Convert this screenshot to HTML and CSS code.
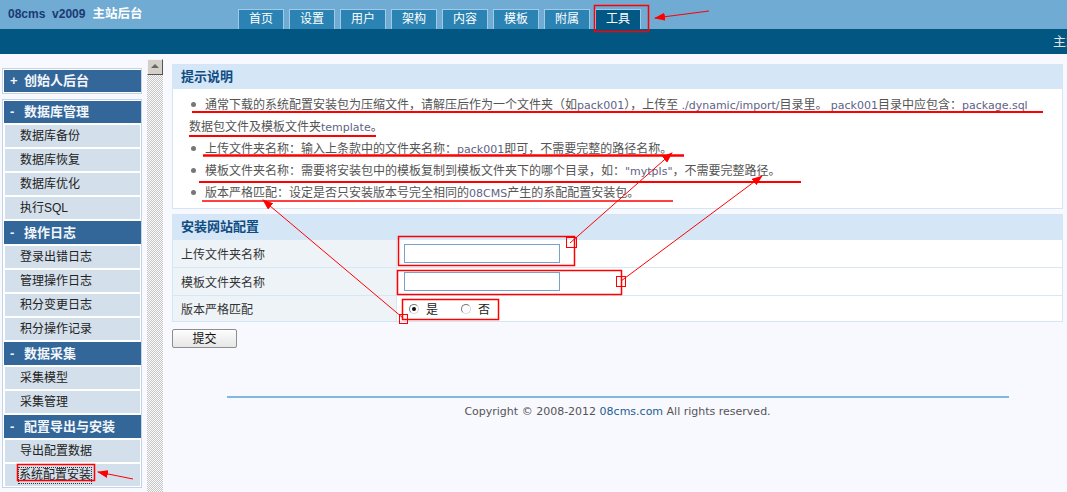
FILE: index.html
```html
<!DOCTYPE html>
<html lang="zh-CN">
<head>
<meta charset="utf-8">
<title>08cms v2009 主站后台</title>
<link rel="stylesheet" href="styles.css">
</head>
<body>
<header class="top">
  <div class="brand"><span class="ver">08cms&nbsp; v2009</span><span class="site">主站后台</span></div>
  <ul class="tabs">
    <li>首页</li>
    <li>设置</li>
    <li>用户</li>
    <li>架构</li>
    <li>内容</li>
    <li>模板</li>
    <li>附属</li>
    <li class="on">工具</li>
  </ul>
</header>
<div class="band"><span>主站首页</span></div>

<div class="wrap">
  <nav class="side">
    <div class="box">
      <div class="hd"><span class="sign">+</span>创始人后台</div>
    </div>
    <div class="box">
      <div class="hd"><span class="sign">-</span>数据库管理</div>
      <a class="it">数据库备份</a>
      <a class="it">数据库恢复</a>
      <a class="it">数据库优化</a>
      <a class="it">执行SQL</a>
      <div class="hd tall"><span class="sign">-</span>操作日志</div>
      <a class="it">登录出错日志</a>
      <a class="it">管理操作日志</a>
      <a class="it">积分变更日志</a>
      <a class="it">积分操作记录</a>
      <div class="hd tall"><span class="sign">-</span>数据采集</div>
      <a class="it">采集模型</a>
      <a class="it">采集管理</a>
      <div class="hd tall"><span class="sign">-</span>配置导出与安装</div>
      <a class="it">导出配置数据</a>
      <a class="it current"><span class="focus">系统配置安装</span></a>
    </div>
  </nav>

  <div class="scroll"><div class="up"></div></div>

  <main class="main">
    <section class="panel">
      <h2 class="ph">提示说明</h2>
      <ul class="tips">
        <li>通常下载的系统配置安装包为压缩文件，请解压后作为一个文件夹（如<span class="en">pack001</span>），上传至 <span class="en">./dynamic/import/</span>目录里。 <span class="en">pack001</span>目录中应包含：<span class="en">package.sql</span>数据包文件及模板文件夹<span class="en">template</span>。</li>
        <li>上传文件夹名称：输入上条款中的文件夹名称：<span class="en">pack001</span>即可，不需要完整的路径名称。</li>
        <li>模板文件夹名称：需要将安装包中的模板复制到模板文件夹下的哪个目录，如：<span class="en">"mytpls"</span>，不需要完整路径。</li>
        <li>版本严格匹配：设定是否只安装版本号完全相同的<span class="en">08CMS</span>产生的系配配置安装包。</li>
      </ul>
    </section>

    <section class="panel cfg">
      <h2 class="ph">安装网站配置</h2>
      <div class="row">
        <div class="lbl">上传文件夹名称</div>
        <div class="val"><span class="field"></span></div>
      </div>
      <div class="row">
        <div class="lbl">模板文件夹名称</div>
        <div class="val"><span class="field"></span></div>
      </div>
      <div class="row short">
        <div class="lbl">版本严格匹配</div>
        <div class="val">
          <span class="radio checked"></span><span class="opt">是</span>
          <span class="radio"></span><span class="opt">否</span>
        </div>
      </div>
    </section>

    <button class="submit" type="button">提交</button>

    <footer class="foot">
      <div class="rule"></div>
      <p>Copyright © 2008-2012 <span class="host">08cms.com</span> All rights reserved.</p>
    </footer>
  </main>
</div>

<svg class="marks" width="1067" height="492" viewBox="0 0 1067 492">
  <defs>
    <marker id="ah" markerWidth="11" markerHeight="8" refX="10" refY="4" orient="auto" markerUnits="userSpaceOnUse">
      <path d="M0,0 L11,4 L0,8 z" fill="#f00"/>
    </marker>
  </defs>
  <g fill="none" stroke="#f00">
    <!-- boxes -->
    <rect x="594.5" y="5.5" width="54" height="26" stroke-width="1.5"/>
    <rect x="17.5" y="464.5" width="77" height="16" stroke-width="1.5"/>
    <rect x="398.5" y="236.5" width="176" height="29" stroke-width="1.5"/>
    <rect x="397.5" y="270.5" width="224" height="24" stroke-width="1.5"/>
    <rect x="402.5" y="299.5" width="96" height="20" stroke-width="1.5"/>
    <rect x="566.5" y="237.5" width="10" height="10"/>
    <rect x="616.5" y="276.5" width="9" height="10"/>
    <rect x="399.5" y="314.5" width="8" height="9"/>
    <!-- underlines -->
    <line x1="192" y1="112" x2="1043" y2="112" stroke-width="2"/>
    <line x1="189" y1="136" x2="376" y2="136" stroke-width="2"/>
    <line x1="203" y1="155.5" x2="684" y2="155.5" stroke-width="2.5"/>
    <line x1="199" y1="182" x2="801" y2="182" stroke-width="2"/>
    <line x1="202" y1="201" x2="673" y2="201" stroke-width="1.5"/>
    <!-- pointers -->
    <line x1="709" y1="11" x2="655" y2="18" marker-end="url(#ah)"/>
    <line x1="133" y1="479" x2="98" y2="472" marker-end="url(#ah)"/>
    <line x1="403" y1="318" x2="263" y2="200" marker-end="url(#ah)"/>
    <line x1="570" y1="243" x2="672" y2="153" marker-end="url(#ah)"/>
    <line x1="621" y1="281" x2="762" y2="176" marker-end="url(#ah)"/>
  </g>
</svg>
</body>
</html>
```
FILE: styles.css
```css
* { box-sizing: border-box; }

html, body {
  margin: 0;
  padding: 0;
}

body {
  position: relative;
  width: 1067px;
  height: 492px;
  overflow: hidden;
  background: #f8f8ff;
  font-family: "Liberation Sans", "Noto Sans CJK SC", sans-serif;
  font-size: 12px;
  color: #333;
}

/* ---------- top bar ---------- */
.top {
  display: flex;
  height: 29px;
  background: #6fabd2;
}

.brand {
  width: 238px;
  padding-left: 8px;
  line-height: 28px;
  font-weight: bold;
  font-size: 12px;
  white-space: nowrap;
}

.brand .ver { color: #1b3a72; }
.brand .site { color: #fff; margin-left: 7px; font-size: 12.5px; }

.tabs {
  display: flex;
  gap: 5px;
  margin: 0;
  padding: 0;
  list-style: none;
  align-self: flex-end;
}

.tabs li {
  width: 46px;
  height: 20px;
  border: 1px solid #9fcbe8;
  border-bottom: 0;
  background: #2b83b3;
  color: #fff;
  text-align: center;
  line-height: 19px;
  font-size: 12px;
}

.tabs li.on {
  background: #035784;
}

.band {
  height: 25px;
  background: #025682;
  color: #e2e2e2;
  font-size: 13px;
  line-height: 25px;
  padding-left: 1053px;
  white-space: nowrap;
  overflow: hidden;
}

/* ---------- body columns ---------- */
.wrap {
  display: flex;
  align-items: flex-start;
  height: 438px;
}

.side {
  width: 140px;
  margin: 14px 0 0 2px;
  flex: none;
}

.box {
  display: flex;
  flex-direction: column;
  gap: 2px;
  padding: 1px 0;
  border: 1px solid #c3d4e4;
  background: #fff;
}

.box + .box { margin-top: 5px; }

.hd {
  height: 22px;
  margin: 0 0 0 1px;
  padding-left: 6px;
  background: #336699;
  color: #f2f6fb;
  font-weight: bold;
  font-size: 13px;
  line-height: 22px;
  white-space: nowrap;
}

.hd.tall {
  height: 23px;
  line-height: 23px;
}

.hd .sign {
  display: inline-block;
  width: 14px;
}

.it {
  display: block;
  height: 22px;
  margin: 0 1px 0 2px;
  padding-left: 15px;
  background: #d3dfea;
  color: #222;
  font-size: 12px;
  line-height: 22px;
}

.it .focus {
  outline: 1px dotted #333;
  outline-offset: 0;
  display: inline-block;
  line-height: 15px;
  margin-top: 4px;
  margin-left: -1px;
}

.scroll {
  flex: none;
  align-self: stretch;
  width: 16px;
  margin: 5px 0 0 5px;
  background: repeating-conic-gradient(#c6c6c6 0 25%, #fafafa 0 50%) 0 0 / 2px 2px;
}

.scroll .up {
  position: relative;
  height: 16px;
  background: #d4d0c8;
  border: 1px solid;
  border-color: #f4f4f4 #555 #555 #f4f4f4;
}

.scroll .up::after {
  content: "";
  position: absolute;
  left: 3px;
  top: 4px;
  border-left: 4px solid transparent;
  border-right: 4px solid transparent;
  border-bottom: 4px solid #666;
}

.main {
  flex: none;
  width: 891px;
  margin: 10px 0 0 9px;
}

/* ---------- panels ---------- */
.panel {
  border: 1px solid #d4e6f6;
  background: #fff;
}

.ph {
  margin: 0;
  height: 24px;
  padding-left: 8px;
  background: #d5e6f6;
  color: #0f4c83;
  font-size: 13px;
  font-weight: bold;
  line-height: 24px;
}

.tips {
  margin: 0;
  padding: 5px 26px 4px 16px;
  list-style: none;
  color: #555;
  font-size: 12px;
  line-height: 22px;
}

.tips li::before {
  content: "";
  display: inline-block;
  width: 5px;
  height: 5px;
  margin: 0 9px 0 2px;
  border-radius: 50%;
  background: #777;
  vertical-align: 2px;
}

.tips .en {
  font-family: "DejaVu Sans", sans-serif;
  font-size: 11px;
  line-height: 1;
  color: #5d6386;
}

.cfg { margin-top: 5px; }

.row {
  display: grid;
  grid-template-columns: 224px 1fr;
  height: 28px;
  border-top: 1px solid #d6e7f6;
}

.row.short { height: 26px; }

.lbl {
  padding-left: 8px;
  background: #eef3f8;
  border-right: 1px solid #d6e7f6;
  color: #333;
  font-size: 12px;
  display: flex;
  align-items: center;
}

.val {
  display: flex;
  align-items: center;
  padding-left: 7px;
}

.field {
  display: block;
  width: 156px;
  height: 19px;
  border: 1px solid #78a2cc;
  background: #fff;
}

.radio {
  position: relative;
  width: 10px;
  height: 10px;
  margin-left: 5px;
  border-radius: 50%;
  border: 1px solid;
  border-color: #777 #d6d6d6 #d6d6d6 #777;
  background: #fff;
}

.radio + .opt { margin-left: 7px; margin-right: 18px; font-size: 12px; color: #222; }

.radio.checked::after {
  content: "";
  position: absolute;
  left: 2px;
  top: 2px;
  width: 4px;
  height: 4px;
  border-radius: 50%;
  background: #111;
}

.submit {
  display: block;
  width: 65px;
  height: 19px;
  margin-top: 7px;
  padding: 0;
  border: 1px solid #8e8e8e;
  border-radius: 2px;
  background: linear-gradient(#fdfdfd, #e6e6e6);
  color: #111;
  font-family: "Liberation Sans", "Noto Sans CJK SC", sans-serif;
  font-size: 12px;
  line-height: 16px;
}

.foot { margin-top: 48px; }

.foot .rule {
  width: 782px;
  height: 2px;
  margin: 0 auto;
  background: #80b9db;
}

.foot p {
  margin: 7px 0 0;
  text-align: center;
  font-family: "DejaVu Sans", sans-serif;
  font-size: 11px;
  color: #555;
}

.foot .host { color: #1d5f8c; }

/* ---------- red markup layer ---------- */
.marks {
  position: absolute;
  left: 0;
  top: 0;
  pointer-events: none;
}
```
